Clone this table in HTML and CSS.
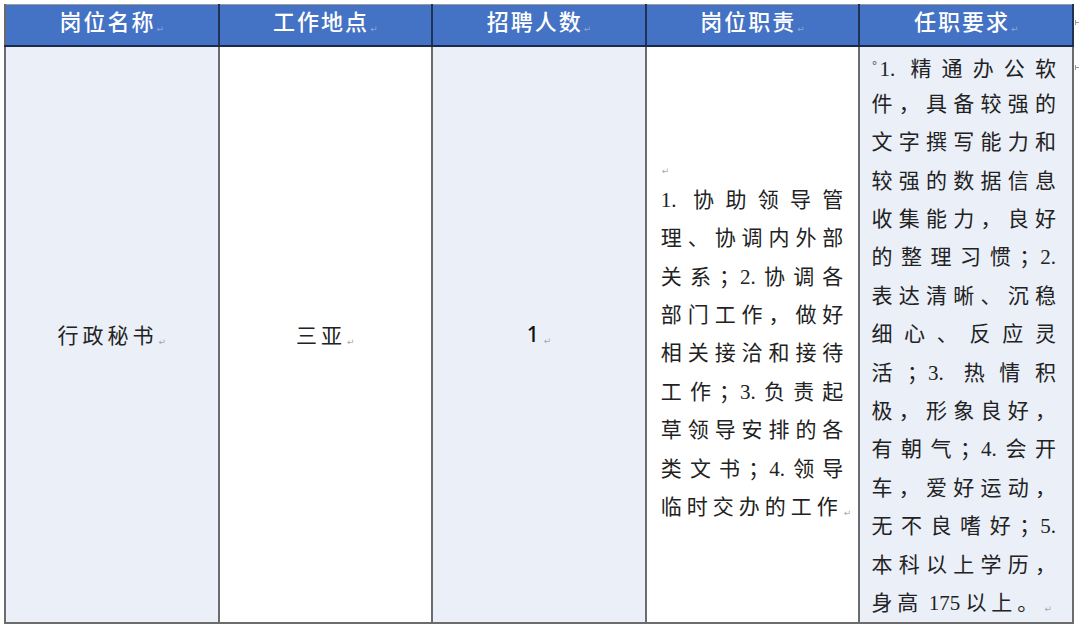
FILE: index.html
```html
<!DOCTYPE html>
<html lang="zh-CN">
<head>
<meta charset="utf-8">
<title>招聘岗位</title>
<link rel="stylesheet" href="styles.css">
</head>
<body>
<div class="page">
  <table class="jobs">
    <colgroup>
      <col class="c"><col class="c"><col class="c"><col class="c"><col class="c">
    </colgroup>
    <thead>
      <tr>
        <th>岗位名称<span class="rm">↵</span></th>
        <th>工作地点<span class="rm">↵</span></th>
        <th>招聘人数<span class="rm">↵</span></th>
        <th>岗位职责<span class="rm">↵</span></th>
        <th>任职要求<span class="rm">↵</span></th>
      </tr>
    </thead>
    <tbody>
      <tr>
        <td class="tint center">行政秘书<span class="rm">↵</span></td>
        <td class="center">三亚<span class="rm">↵</span></td>
        <td class="tint center num">1<span class="rm">↵</span></td>
        <td class="duty">
          <div class="lines">
            <div class="ln blank"><span class="rm">↵</span></div>
            <div class="ln j">1.&nbsp;协助领导管</div>
            <div class="ln j">理、协调内外部</div>
            <div class="ln j">关系；2.协调各</div>
            <div class="ln j">部门工作，做好</div>
            <div class="ln j">相关接洽和接待</div>
            <div class="ln j">工作；3.负责起</div>
            <div class="ln j">草领导安排的各</div>
            <div class="ln j">类文书；4.领导</div>
            <div class="ln last">临时交办的工作<span class="rm">↵</span></div>
          </div>
        </td>
        <td class="tint req">
          <div class="lines">
            <div class="ln j"><span class="deg">°</span>1.&nbsp;精通办公软</div>
            <div class="ln j">件，具备较强的</div>
            <div class="ln j">文字撰写能力和</div>
            <div class="ln j">较强的数据信息</div>
            <div class="ln j">收集能力，良好</div>
            <div class="ln j">的整理习惯；2.</div>
            <div class="ln j">表达清晰、沉稳</div>
            <div class="ln j">细心、反应灵</div>
            <div class="ln j">活；3. 热情积</div>
            <div class="ln j">极，形象良好，</div>
            <div class="ln j">有朝气；4.会开</div>
            <div class="ln j">车，爱好运动，</div>
            <div class="ln j">无不良嗜好；5.</div>
            <div class="ln j">本科以上学历，</div>
            <div class="ln last">身高<span class="lat">&nbsp;175&nbsp;</span>以上。<span class="rm">↵</span></div>
          </div>
        </td>
      </tr>
    </tbody>
  </table>
  <div class="rowmarks">
    <span class="em em1"></span>
    <span class="em em2"></span>
  </div>
</div>
</body>
</html>
```
FILE: styles.css
```css
html, body {
  margin: 0;
  padding: 0;
  background: #ffffff;
}

.page {
  display: flex;
  align-items: flex-start;
  padding: 4px 0 0 4px;
}

.jobs {
  border-collapse: collapse;
  table-layout: fixed;
  width: 1071px;
  font-family: "Liberation Serif", "Noto Sans CJK SC", serif;
  color: #222;
}

.jobs col.c {
  width: 20%;
}

.jobs thead tr {
  height: 41px;
}

.jobs th {
  background: #4472c4;
  color: #ffffff;
  font-family: "Noto Sans CJK SC", sans-serif;
  font-weight: 500;
  font-size: 22px;
  letter-spacing: 2px;
  line-height: 28px;
  padding: 0;
  text-align: center;
  vertical-align: middle;
  border-left: 2px solid #1f3256;
  border-right: 2px solid #1f3256;
  border-top: 1px solid #9a9a9a;
  border-bottom: 2px solid #1b2a48;
}

.jobs th:first-child {
  border-left: 2px solid #6a6a6a;
}

.jobs tbody tr {
  height: 577px;
}

.jobs td {
  padding: 0;
  vertical-align: middle;
  border: 2px solid #6c6c6c;
  background: #ffffff;
  font-size: 21px;
}

.jobs td.tint {
  background: #eaeff8;
}

.center {
  text-align: center;
  letter-spacing: 4px;
}

.num {
  font-family: "Noto Sans", sans-serif;
  font-size: 20px;
  font-weight: 500;
  color: #111;
}

.duty {
  padding: 0 15px 0 14px !important;
}

.req {
  vertical-align: top !important;
  padding: 0 16px 0 11px !important;
}

.lines {
  display: flex;
  flex-direction: column;
}

.ln {
  height: 38.4px;
  line-height: 38.4px;
  font-size: 21px;
  white-space: nowrap;
  overflow: visible;
}

.ln.j {
  text-align: justify;
  text-align-last: justify;
  letter-spacing: 0;
}

.ln.last {
  text-align: left;
  letter-spacing: 5px;
}

.lat {
  letter-spacing: 0;
}

.ln.blank {
  line-height: 46px;
}

.rm {
  font-family: "DejaVu Sans", sans-serif;
  font-size: 9px;
  letter-spacing: 0;
  color: #a9a9a9;
  font-weight: 400;
  margin-left: 1px;
  vertical-align: -2px;
}

.jobs th .rm {
  color: #8ea4d6;
}

.deg {
  font-family: "DejaVu Sans", sans-serif;
  font-size: 12px;
  color: #666;
  vertical-align: 6px;
  margin-right: 2px;
}

.rowmarks {
  display: flex;
  flex-direction: column;
  width: 5px;
  padding-left: 1px;
}

.em {
  display: block;
  position: relative;
  width: 4px;
  height: 0;
  border-top: 1px solid #9a9a9a;
}

.em::before {
  content: "";
  position: absolute;
  left: 0;
  top: -3px;
  width: 0;
  height: 5px;
  border-left: 1px solid #9a9a9a;
}

.em1 {
  margin-top: 18px;
}

.em2 {
  margin-top: 44px;
}
```
